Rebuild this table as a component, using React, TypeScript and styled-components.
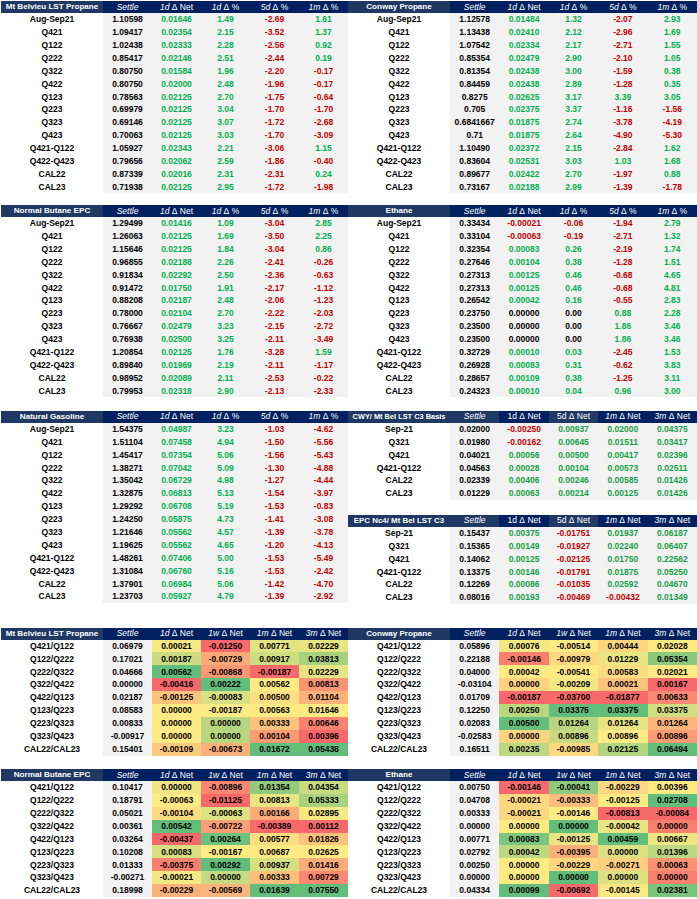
import React from 'react';
import styled, { createGlobalStyle } from 'styled-components';

type Tone = 'light' | 'dark';
type Head = { it: string; rest: string; tone: Tone };
type Kind = 'sign' | 'heat';

const GlobalStyle = createGlobalStyle`
    html, body {
        margin: 0;
        padding: 0;
        background: #ffffff;
    }
    body {
        font-family: 'Liberation Sans', Arial, sans-serif;
    }
`;

const Page = styled.div`
    width: 697px;
    height: 899px;
    padding-left: 1px;
    box-sizing: border-box;
    overflow: hidden;
    background: #ffffff;
`;

const Band = styled.div<{ $top: number }>`
    display: grid;
    grid-template-columns: 347px 349px;
    align-items: start;
    margin-top: ${ p => p.$top }px;
`;

const Stack = styled.div<{ $gap: number }>`
    display: flex;
    flex-direction: column;
    gap: ${ p => p.$gap }px;
`;

const Grid = styled.div`
    display: grid;
    grid-template-columns: 102px repeat(5, 1fr);
    grid-template-rows: 12px;
    grid-auto-rows: 12.9px;
    font-size: 8.5px;
    line-height: 1;
`;

const HeadCell = styled.div<{ $tone: Tone; $label?: boolean; $size?: number }>`
    background: ${ p => (p.$tone === 'light' ? '#1f3864' : '#002060') };
    color: #ffffff;
    display: flex;
    align-items: center;
    justify-content: safe center;
    white-space: nowrap;
    overflow: hidden;
    font-weight: ${ p => (p.$label ? 700 : 400) };
    font-size: ${ p => p.$size ?? 8.5 }px;

    i {
        font-style: italic;
    }
`;

const NameCell = styled.div`
    display: flex;
    align-items: center;
    justify-content: center;
    font-weight: 700;
    color: #000000;
    background: #ffffff;
    white-space: nowrap;
`;

const NumCell = styled.div<{ $bg: string; $color: string }>`
    display: flex;
    align-items: center;
    justify-content: center;
    font-weight: 700;
    color: ${ p => p.$color };
    background: ${ p => p.$bg };
    white-space: nowrap;
`;

const GREY = '#f2f2f2';
const RED_TXT = '#c00000';

const RED = [248, 105, 107];
const YEL = [255, 235, 132];
const GRN = [99, 190, 123];

const mix = (a: number[], b: number[], t: number) => {
    const k = Math.max(0, Math.min(1, t));
    const c = a.map((v, i) => Math.round(v + (b[i] - v) * k));
    return `rgb(${ c[0] }, ${ c[1] }, ${ c[2] })`;
};

const percentile50 = (vals: number[]) => {
    const s = [...vals].sort((a, b) => a - b);
    const rank = (s.length - 1) * 0.5;
    const lo = Math.floor(rank);
    const hi = Math.ceil(rank);
    return s[lo] + (s[hi] - s[lo]) * (rank - lo);
};

// Excel-style 3 colour scale: min red, 50th percentile yellow, max green
const heatScale = (vals: number[]) => {
    const min = Math.min(...vals);
    const max = Math.max(...vals);
    const mid = percentile50(vals);
    return (v: number) => {
        if (v <= mid) {
            return mid === min ? mix(YEL, YEL, 0) : mix(RED, YEL, (v - min) / (mid - min));
        }
        return max === mid ? mix(YEL, YEL, 0) : mix(YEL, GRN, (v - mid) / (max - mid));
    };
};

const signColor = (s: string, green: string) => {
    const v = parseFloat(s);
    if (v > 0) return green;
    if (v < 0) return RED_TXT;
    return '#000000';
};

const pctHeads: Head[] = [
    { it: 'Settle', rest: '', tone: 'dark' },
    { it: '1d', rest: ' Δ Net', tone: 'dark' },
    { it: '1d', rest: ' Δ %', tone: 'dark' },
    { it: '5d', rest: ' Δ %', tone: 'dark' },
    { it: '1m', rest: ' Δ %', tone: 'dark' }
];

const basisHeads: Head[] = [
    { it: 'Settle', rest: '', tone: 'light' },
    { it: '', rest: '1d Δ Net', tone: 'dark' },
    { it: '', rest: '5d Δ Net', tone: 'light' },
    { it: '1m', rest: ' Δ Net', tone: 'dark' },
    { it: '3m', rest: ' Δ Net', tone: 'dark' }
];

const spreadHeads: Head[] = [
    { it: 'Settle', rest: '', tone: 'dark' },
    { it: '1d', rest: ' Δ Net', tone: 'dark' },
    { it: '1w', rest: ' Δ Net', tone: 'dark' },
    { it: '1m', rest: ' Δ Net', tone: 'dark' },
    { it: '3m', rest: ' Δ Net', tone: 'dark' }
];

type TableProps = {
    title: string;
    titleSize?: number;
    heads: Head[];
    rows: string[][];
    kind: Kind;
    green?: string;
};

const DataTable = ({ title, titleSize = 8.1, heads, rows, kind, green = '#00b050' }: TableProps) => {
    const scales = React.useMemo(() => {
        if (kind !== 'heat') return [];
        return [2, 3, 4, 5].map(ci => heatScale(rows.map(r => parseFloat(r[ci]))));
    }, [rows, kind]);

    return (
        <Grid>
            <HeadCell $tone='light' $label $size={ titleSize }>{ title }</HeadCell>
            { heads.map(h => (
                <HeadCell key={ h.it + h.rest } $tone={ h.tone }>
                    { h.it && <i>{ h.it }</i> }
                    { h.rest.replace(/ /g, '\u00a0') }
                </HeadCell>
            )) }
            { rows.map(r => (
                <React.Fragment key={ r[0] }>
                    <NameCell>{ r[0] }</NameCell>
                    <NumCell $bg={ GREY } $color='#000000'>{ r[1] }</NumCell>
                    { r.slice(2).map((v, i) => (
                        <NumCell
                            key={ i }
                            $bg={ kind === 'heat' ? scales[i](parseFloat(v)) : GREY }
                            $color={ kind === 'heat' ? '#000000' : signColor(v, green) }
                        >
                            { v }
                        </NumCell>
                    )) }
                </React.Fragment>
            )) }
        </Grid>
    );
};

const mtBelvieu = [
    ['Aug-Sep21', '1.10598', '0.01646', '1.49', '-2.69', '1.61'],
    ['Q421', '1.09417', '0.02354', '2.15', '-3.52', '1.37'],
    ['Q122', '1.02438', '0.02333', '2.28', '-2.56', '0.92'],
    ['Q222', '0.85417', '0.02146', '2.51', '-2.44', '0.19'],
    ['Q322', '0.80750', '0.01584', '1.96', '-2.20', '-0.17'],
    ['Q422', '0.80750', '0.02000', '2.48', '-1.96', '-0.17'],
    ['Q123', '0.78563', '0.02125', '2.70', '-1.75', '-0.64'],
    ['Q223', '0.69979', '0.02125', '3.04', '-1.70', '-1.70'],
    ['Q323', '0.69146', '0.02125', '3.07', '-1.72', '-2.68'],
    ['Q423', '0.70063', '0.02125', '3.03', '-1.70', '-3.09'],
    ['Q421-Q122', '1.05927', '0.02343', '2.21', '-3.06', '1.15'],
    ['Q422-Q423', '0.79656', '0.02062', '2.59', '-1.86', '-0.40'],
    ['CAL22', '0.87339', '0.02016', '2.31', '-2.31', '0.24'],
    ['CAL23', '0.71938', '0.02125', '2.95', '-1.72', '-1.98']
];

const conway = [
    ['Aug-Sep21', '1.12578', '0.01484', '1.32', '-2.07', '2.93'],
    ['Q421', '1.13438', '0.02410', '2.12', '-2.96', '1.69'],
    ['Q122', '1.07542', '0.02334', '2.17', '-2.71', '1.55'],
    ['Q222', '0.85354', '0.02479', '2.90', '-2.10', '1.05'],
    ['Q322', '0.81354', '0.02438', '3.00', '-1.59', '0.38'],
    ['Q422', '0.84459', '0.02438', '2.89', '-1.28', '0.35'],
    ['Q123', '0.8275', '0.02625', '3.17', '3.39', '3.05'],
    ['Q223', '0.705', '0.02375', '3.37', '-1.16', '-1.56'],
    ['Q323', '0.6841667', '0.01875', '2.74', '-3.78', '-4.19'],
    ['Q423', '0.71', '0.01875', '2.64', '-4.90', '-5.30'],
    ['Q421-Q122', '1.10490', '0.02372', '2.15', '-2.84', '1.62'],
    ['Q422-Q423', '0.83604', '0.02531', '3.03', '1.03', '1.68'],
    ['CAL22', '0.89677', '0.02422', '2.70', '-1.97', '0.88'],
    ['CAL23', '0.73167', '0.02188', '2.99', '-1.39', '-1.78']
];

const butane = [
    ['Aug-Sep21', '1.29499', '0.01416', '1.09', '-3.04', '2.85'],
    ['Q421', '1.26063', '0.02125', '1.69', '-3.50', '2.25'],
    ['Q122', '1.15646', '0.02125', '1.84', '-3.04', '0.86'],
    ['Q222', '0.96855', '0.02188', '2.26', '-2.41', '-0.26'],
    ['Q322', '0.91834', '0.02292', '2.50', '-2.36', '-0.63'],
    ['Q422', '0.91472', '0.01750', '1.91', '-2.17', '-1.12'],
    ['Q123', '0.88208', '0.02187', '2.48', '-2.06', '-1.23'],
    ['Q223', '0.78000', '0.02104', '2.70', '-2.22', '-2.03'],
    ['Q323', '0.76667', '0.02479', '3.23', '-2.15', '-2.72'],
    ['Q423', '0.76938', '0.02500', '3.25', '-2.11', '-3.49'],
    ['Q421-Q122', '1.20854', '0.02125', '1.76', '-3.28', '1.59'],
    ['Q422-Q423', '0.89840', '0.01969', '2.19', '-2.11', '-1.17'],
    ['CAL22', '0.98952', '0.02089', '2.11', '-2.53', '-0.22'],
    ['CAL23', '0.79953', '0.02318', '2.90', '-2.13', '-2.33']
];

const ethane = [
    ['Aug-Sep21', '0.33434', '-0.00021', '-0.06', '-1.94', '2.79'],
    ['Q421', '0.33104', '-0.00063', '-0.19', '-2.71', '1.32'],
    ['Q122', '0.32354', '0.00083', '0.26', '-2.19', '1.74'],
    ['Q222', '0.27646', '0.00104', '0.38', '-1.28', '1.51'],
    ['Q322', '0.27313', '0.00125', '0.46', '-0.68', '4.65'],
    ['Q422', '0.27313', '0.00125', '0.46', '-0.68', '4.81'],
    ['Q123', '0.26542', '0.00042', '0.16', '-0.55', '2.83'],
    ['Q223', '0.23750', '0.00000', '0.00', '0.88', '2.28'],
    ['Q323', '0.23500', '0.00000', '0.00', '1.86', '3.46'],
    ['Q423', '0.23500', '0.00000', '0.00', '1.86', '3.46'],
    ['Q421-Q122', '0.32729', '0.00010', '0.03', '-2.45', '1.53'],
    ['Q422-Q423', '0.26928', '0.00083', '0.31', '-0.62', '3.83'],
    ['CAL22', '0.28657', '0.00109', '0.38', '-1.25', '3.11'],
    ['CAL23', '0.24323', '0.00010', '0.04', '0.96', '3.00']
];

const gasoline = [
    ['Aug-Sep21', '1.54375', '0.04987', '3.23', '-1.03', '-4.62'],
    ['Q421', '1.51104', '0.07458', '4.94', '-1.50', '-5.56'],
    ['Q122', '1.45417', '0.07354', '5.06', '-1.56', '-5.43'],
    ['Q222', '1.38271', '0.07042', '5.09', '-1.30', '-4.88'],
    ['Q322', '1.35042', '0.06729', '4.98', '-1.27', '-4.44'],
    ['Q422', '1.32875', '0.06813', '5.13', '-1.54', '-3.97'],
    ['Q123', '1.29292', '0.06708', '5.19', '-1.53', '-0.83'],
    ['Q223', '1.24250', '0.05875', '4.73', '-1.41', '-3.08'],
    ['Q323', '1.21646', '0.05562', '4.57', '-1.39', '-3.78'],
    ['Q423', '1.19625', '0.05562', '4.65', '-1.20', '-4.13'],
    ['Q421-Q122', '1.48261', '0.07406', '5.00', '-1.53', '-5.49'],
    ['Q422-Q423', '1.31084', '0.06760', '5.16', '-1.53', '-2.42'],
    ['CAL22', '1.37901', '0.06984', '5.06', '-1.42', '-4.70'],
    ['CAL23', '1.23703', '0.05927', '4.79', '-1.39', '-2.92']
];

const cwyBasis = [
    ['Sep-21', '0.02000', '-0.00250', '0.00937', '0.02000', '0.04375'],
    ['Q321', '0.01980', '-0.00162', '0.00645', '0.01511', '0.03417'],
    ['Q421', '0.04021', '0.00056', '0.00500', '0.00417', '0.02396'],
    ['Q421-Q122', '0.04563', '0.00028', '0.00104', '0.00573', '0.02511'],
    ['CAL22', '0.02339', '0.00406', '0.00246', '0.00585', '0.01426'],
    ['CAL23', '0.01229', '0.00063', '0.00214', '0.00125', '0.01426']
];

const epcBasis = [
    ['Sep-21', '0.15437', '0.00375', '-0.01751', '0.01937', '0.06187'],
    ['Q321', '0.15365', '0.00149', '-0.01927', '0.02240', '0.06407'],
    ['Q421', '0.14062', '0.00125', '-0.02125', '0.01750', '0.22562'],
    ['Q421-Q122', '0.13375', '0.00146', '-0.01791', '0.01875', '0.05250'],
    ['CAL22', '0.12269', '0.00086', '-0.01035', '0.02592', '0.04670'],
    ['CAL23', '0.08016', '0.00193', '-0.00469', '-0.00432', '0.01349']
];

const mtBelSpread = [
    ['Q421/Q122', '0.06979', '0.00021', '-0.01250', '0.00771', '0.02229'],
    ['Q122/Q222', '0.17021', '0.00187', '-0.00729', '0.00917', '0.03813'],
    ['Q222/Q322', '0.04666', '0.00562', '-0.00868', '-0.00187', '0.02229'],
    ['Q322/Q422', '0.00000', '-0.00416', '0.00222', '0.00562', '0.00813'],
    ['Q422/Q123', '0.02187', '-0.00125', '-0.00083', '0.00500', '0.01104'],
    ['Q123/Q223', '0.08583', '0.00000', '-0.00187', '0.00563', '0.01646'],
    ['Q223/Q323', '0.00833', '0.00000', '0.00000', '0.00333', '0.00646'],
    ['Q323/Q423', '-0.00917', '0.00000', '0.00000', '0.00104', '0.00396'],
    ['CAL22/CAL23', '0.15401', '-0.00109', '-0.00673', '0.01672', '0.05438']
];

const conwaySpread = [
    ['Q421/Q122', '0.05896', '0.00076', '-0.00514', '0.00444', '0.02028'],
    ['Q122/Q222', '0.22188', '-0.00146', '-0.00979', '0.01229', '0.05354'],
    ['Q222/Q322', '0.04000', '0.00042', '-0.00541', '0.00583', '0.02021'],
    ['Q322/Q422', '-0.03104', '0.00000', '-0.00209', '0.00021', '0.00167'],
    ['Q422/Q123', '0.01709', '-0.00187', '-0.03700', '-0.01877', '0.00633'],
    ['Q123/Q223', '0.12250', '0.00250', '0.03375', '0.03375', '0.03375'],
    ['Q223/Q323', '0.02083', '0.00500', '0.01264', '0.01264', '0.01264'],
    ['Q323/Q423', '-0.02583', '0.00000', '0.00896', '0.00896', '0.00896'],
    ['CAL22/CAL23', '0.16511', '0.00235', '-0.00985', '0.02125', '0.06494']
];

const butaneSpread = [
    ['Q421/Q122', '0.10417', '0.00000', '-0.00896', '0.01354', '0.04354'],
    ['Q122/Q222', '0.18791', '-0.00063', '-0.01125', '0.00813', '0.05333'],
    ['Q222/Q322', '0.05021', '-0.00104', '-0.00063', '0.00166', '0.02895'],
    ['Q322/Q422', '0.00361', '0.00542', '-0.00722', '-0.00389', '0.00112'],
    ['Q422/Q123', '0.03264', '-0.00437', '0.00264', '0.00577', '0.01826'],
    ['Q123/Q223', '0.10208', '0.00083', '-0.00167', '0.00687', '0.02625'],
    ['Q223/Q323', '0.01333', '-0.00375', '0.00292', '0.00937', '0.01416'],
    ['Q323/Q423', '-0.00271', '-0.00021', '0.00000', '0.00333', '0.00729'],
    ['CAL22/CAL23', '0.18998', '-0.00229', '-0.00569', '0.01639', '0.07550']
];

const ethaneSpread = [
    ['Q421/Q122', '0.00750', '-0.00146', '-0.00041', '-0.00229', '0.00396'],
    ['Q122/Q222', '0.04708', '-0.00021', '-0.00333', '-0.00125', '0.02708'],
    ['Q222/Q322', '0.00333', '-0.00021', '-0.00146', '-0.00813', '-0.00084'],
    ['Q322/Q422', '0.00000', '0.00000', '0.00000', '-0.00042', '0.00000'],
    ['Q422/Q123', '0.00771', '0.00083', '-0.00125', '0.00459', '0.00667'],
    ['Q123/Q223', '0.02792', '0.00042', '-0.00395', '0.00000', '0.01396'],
    ['Q223/Q323', '0.00250', '0.00000', '-0.00229', '-0.00271', '0.00063'],
    ['Q323/Q423', '0.00000', '0.00000', '0.00000', '0.00000', '0.00000'],
    ['CAL22/CAL23', '0.04334', '0.00099', '-0.00692', '-0.00145', '0.02381']
];

export default function App() {
    return (
        <>
            <GlobalStyle />
            <Page>
                <Band $top={ 1 }>
                    <DataTable title='Mt Belvieu LST Propane' heads={ pctHeads } rows={ mtBelvieu } kind='sign' />
                    <DataTable title='Conway Propane' heads={ pctHeads } rows={ conway } kind='sign' />
                </Band>
                <Band $top={ 11.4 }>
                    <DataTable title='Normal Butane EPC' heads={ pctHeads } rows={ butane } kind='sign' />
                    <DataTable title='Ethane' heads={ pctHeads } rows={ ethane } kind='sign' />
                </Band>
                <Band $top={ 13.4 }>
                    <DataTable title='Natural Gasoline' heads={ pctHeads } rows={ gasoline } kind='sign' />
                    <Stack $gap={ 14.6 }>
                        <DataTable
                            title='CWY/ Mt Bel LST C3 Basis'
                            titleSize={ 7.4 }
                            heads={ basisHeads }
                            rows={ cwyBasis }
                            kind='sign'
                            green='#14a046'
                        />
                        <DataTable
                            title='EPC Nc4/ Mt Bel LST C3'
                            titleSize={ 7.9 }
                            heads={ basisHeads }
                            rows={ epcBasis }
                            kind='sign'
                            green='#14a046'
                        />
                    </Stack>
                </Band>
                <Band $top={ 23.6 }>
                    <DataTable title='Mt Belvieu LST Propane' heads={ spreadHeads } rows={ mtBelSpread } kind='heat' />
                    <DataTable title='Conway Propane' heads={ spreadHeads } rows={ conwaySpread } kind='heat' />
                </Band>
                <Band $top={ 13.4 }>
                    <DataTable title='Normal Butane EPC' heads={ spreadHeads } rows={ butaneSpread } kind='heat' />
                    <DataTable title='Ethane' heads={ spreadHeads } rows={ ethaneSpread } kind='heat' />
                </Band>
            </Page>
        </>
    );
}
